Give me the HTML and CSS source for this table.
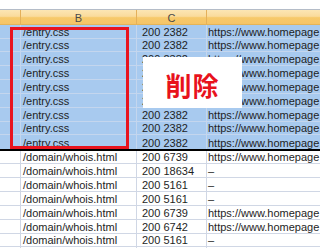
FILE: index.html
```html
<!DOCTYPE html>
<html lang="ja">
<head>
<meta charset="utf-8">
<link rel="stylesheet" href="styles.css">
</head>
<body>
<div class="sheet">
  <div class="topbar"></div>
  <div class="row head">
    <div class="cell"></div>
    <div class="cell">B</div>
    <div class="cell">C</div>
    <div class="cell"></div>
  </div>

  <div class="row sel h14"><div class="cell"></div><div class="cell b">/entry.css</div><div class="cell c">200 2382</div><div class="cell d">https://www.homepage</div></div>
  <div class="row sel h13"><div class="cell"></div><div class="cell b">/entry.css</div><div class="cell c">200 2382</div><div class="cell d">https://www.homepage</div></div>
  <div class="row sel h14"><div class="cell"></div><div class="cell b">/entry.css</div><div class="cell c">200 2382</div><div class="cell d">https://www.homepage</div></div>
  <div class="row sel h14"><div class="cell"></div><div class="cell b">/entry.css</div><div class="cell c">200 2382</div><div class="cell d">https://www.homepage</div></div>
  <div class="row sel h14"><div class="cell"></div><div class="cell b">/entry.css</div><div class="cell c">200 2382</div><div class="cell d">https://www.homepage</div></div>
  <div class="row sel h14"><div class="cell"></div><div class="cell b">/entry.css</div><div class="cell c">200 2382</div><div class="cell d">https://www.homepage</div></div>
  <div class="row sel h14"><div class="cell"></div><div class="cell b">/entry.css</div><div class="cell c">200 2382</div><div class="cell d">https://www.homepage</div></div>
  <div class="row sel h13"><div class="cell"></div><div class="cell b">/entry.css</div><div class="cell c">200 2382</div><div class="cell d">https://www.homepage</div></div>
  <div class="row sel last"><div class="cell"></div><div class="cell b">/entry.css</div><div class="cell c">200 2382</div><div class="cell d">https://www.homepage</div></div>

  <div class="row h13"><div class="cell"></div><div class="cell b">/domain/whois.html</div><div class="cell c">200 6739</div><div class="cell d">https://www.homepage</div></div>
  <div class="row h14"><div class="cell"></div><div class="cell b">/domain/whois.html</div><div class="cell c">200 18634</div><div class="cell d">–</div></div>
  <div class="row h14"><div class="cell"></div><div class="cell b">/domain/whois.html</div><div class="cell c">200 5161</div><div class="cell d">–</div></div>
  <div class="row h14"><div class="cell"></div><div class="cell b">/domain/whois.html</div><div class="cell c">200 5161</div><div class="cell d">–</div></div>
  <div class="row h14"><div class="cell"></div><div class="cell b">/domain/whois.html</div><div class="cell c">200 6739</div><div class="cell d">https://www.homepage</div></div>
  <div class="row h14"><div class="cell"></div><div class="cell b">/domain/whois.html</div><div class="cell c">200 6742</div><div class="cell d">https://www.homepage</div></div>
  <div class="row h13"><div class="cell"></div><div class="cell b">/domain/whois.html</div><div class="cell c">200 5161</div><div class="cell d">–</div></div>
  <div class="row h14"><div class="cell"></div><div class="cell b"></div><div class="cell c"></div><div class="cell d"></div></div>

  <div class="redbox"></div>
  <div class="label">削除</div>
</div>
</body>
</html>
```
FILE: styles.css
```css
html, body {
  margin: 0;
  padding: 0;
  background: #ffffff;
}
body {
  width: 320px;
  height: 248px;
  overflow: hidden;
}
.sheet {
  position: relative;
  width: 320px;
  height: 248px;
  overflow: hidden;
  font-family: "Liberation Sans", Arial, sans-serif;
  font-size: 11px;
  color: #1e1e1e;
}
.topbar {
  height: 9px;
  border-bottom: 1px solid #b4bcc8;
}
.row {
  display: grid;
  grid-template-columns: 21px 116px 70px 1fr;
  box-sizing: border-box;
  border-bottom: 1px solid #d0d7e5;
}
.cell {
  box-sizing: border-box;
  border-right: 1px solid #d0d7e5;
  display: flex;
  align-items: flex-end;
  line-height: 12px;
  white-space: nowrap;
  overflow: hidden;
}
.cell:last-child {
  border-right: none;
}
.head {
  height: 15px;
  background: linear-gradient(#fce6b4 0%, #fadb9c 45%, #f7c96a 55%, #f5c468 100%);
  border-bottom: 1px solid #e4b458;
}
.head .cell {
  border-right-color: #e4b05a;
  justify-content: center;
  align-items: center;
  color: #4a4a4a;
  padding-top: 1px;
}
.h13 { height: 13px; }
.h14 { height: 14px; }
.sel {
  background: #a8caef;
  border-bottom-color: #c4d6ee;
}
.sel .cell {
  border-right-color: #c4d6ee;
}
.last {
  height: 16px;
  border-bottom: 2px solid #000000;
}
.b { padding-left: 2px; }
.c { padding-left: 5px; }
.d { padding-left: 1px; }

.redbox {
  position: absolute;
  left: 10px;
  top: 27px;
  width: 119px;
  height: 122px;
  box-sizing: border-box;
  border: 3px solid #e8141e;
}
.label {
  position: absolute;
  left: 143px;
  top: 57px;
  width: 99px;
  height: 51px;
  box-sizing: border-box;
  padding-top: 4px;
  background: #ffffff;
  display: flex;
  align-items: center;
  justify-content: center;
  font-family: "Noto Sans CJK JP", sans-serif;
  font-weight: 700;
  font-size: 26px;
  letter-spacing: 1px;
  color: #e8121c;
}
```
